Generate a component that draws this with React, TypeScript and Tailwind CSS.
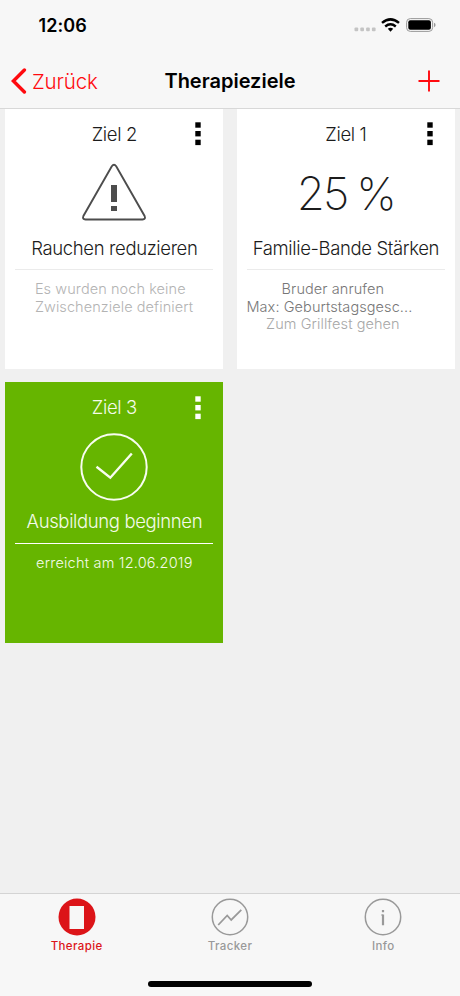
import type { ReactNode } from 'react'
import { clsx } from 'clsx'

interface GoalCardProps {
  title: string
  name: string
  reached?: boolean
  illustration: ReactNode
  children: ReactNode
}

function MenuDots() {
  return (
    <svg width="6" height="24" viewBox="0 0 6 24" fill="currentColor">
      <rect x="0.3" y="0.3" width="5.4" height="5.4" />
      <rect x="0.3" y="9" width="5.4" height="5.4" />
      <rect x="0.3" y="17.7" width="5.4" height="5.4" />
    </svg>
  )
}

function GoalCard({ title, name, reached = false, illustration, children }: GoalCardProps) {
  return (
    <section className={clsx('flex h-[261px] flex-col', reached ? 'bg-[#66b500] text-[#f4fbe9]' : 'bg-white text-[#1c1c1c]')}>
      <div className="grid h-[52px] shrink-0 grid-cols-[1fr_60px_1fr] items-center">
        <span />
        <h2 className="mt-px text-center text-[18.5px] font-light tracking-[-0.35px] whitespace-nowrap">{title}</h2>
        <button type="button" aria-label="Menü" className={clsx('mr-[22px] justify-self-end', reached ? 'text-white' : 'text-black')}>
          <MenuDots />
        </button>
      </div>
      <div className="flex h-[68px] shrink-0 items-center justify-center">{illustration}</div>
      <p className="flex h-[41px] shrink-0 items-center justify-center text-[18.5px] font-light tracking-[-0.37px] whitespace-nowrap">
        {name}
      </p>
      <div className={clsx('mx-[10px] h-px shrink-0', reached ? 'bg-white' : 'bg-[#ebebeb]')} />
      <div className="pt-[10px] text-[14.5px] leading-[17.5px] font-light tracking-[0.08px] whitespace-nowrap">{children}</div>
    </section>
  )
}

function WarningIcon() {
  return (
    <svg width="66" height="58" viewBox="0 0 66 58" fill="none" className="mb-[4px]">
      <path d="M30.8 3.2Q33 .2 35.2 3.2L63.6 53Q65 56.4 61.5 56.5H4.5Q1 56.4 2.4 53Z" stroke="#4d4d4d" strokeWidth="1.9" />
      <rect x="30" y="22" width="6" height="17" fill="#4d4d4d" />
      <rect x="30" y="43" width="6" height="5" fill="#4d4d4d" />
    </svg>
  )
}

function CheckIcon() {
  return (
    <svg width="68" height="68" viewBox="0 0 68 68" fill="none" stroke="#f8fdf0" strokeWidth="2" className="mb-[2px] shrink-0">
      <circle cx="34" cy="34" r="32.7" />
      <path d="M16.5 33.8L30.3 44.7L51.8 20.5" strokeWidth="2.4" />
    </svg>
  )
}

function StatusBar() {
  return (
    <div className="flex h-[50px] items-center justify-between pr-[24px] pl-[38.5px]">
      <span className="text-[18px] font-semibold tracking-[0.1px]">12:06</span>
      <div className="flex items-center">
        <svg width="22" height="14" viewBox="0 0 22 14" fill="#c4c4c4" className="mr-[5px]">
          <rect x="0.5" y="9.5" width="3.7" height="3.7" rx="1" />
          <rect x="6.3" y="9.5" width="3.7" height="3.7" rx="1" />
          <rect x="12.1" y="9.5" width="3.7" height="3.7" rx="1" />
          <rect x="17.9" y="9.5" width="3.7" height="3.7" rx="1" />
        </svg>
        <svg width="19" height="14" viewBox="0 0 19 14" className="mr-[6px]">
          <g fill="none" stroke="#000" strokeWidth="2.5">
            <path d="M1 4.9Q9.5 -2.1 18 4.9" />
            <path d="M4.2 8.4Q9.5 4.2 14.8 8.4" />
          </g>
          <path d="M6.8 10.8Q9.5 8.7 12.2 10.8L9.5 13.7Z" />
        </svg>
        <svg width="30" height="14" viewBox="0 0 30 14">
          <rect x="0.6" y="0.6" width="26" height="12.8" rx="3.7" fill="none" stroke="#999" strokeWidth="1" />
          <rect x="2.3" y="2.3" width="22.6" height="9.4" rx="2" />
          <path d="M28 4.8Q29.6 5.4 29.6 7T28 9.2Z" fill="#999" />
        </svg>
      </div>
    </div>
  )
}

interface TabProps {
  label: string
  active?: boolean
  children: ReactNode
}

function Tab({ label, active = false, children }: TabProps) {
  return (
    <button
      type="button"
      className={clsx('flex flex-col items-center pt-[4px] text-[11.5px] font-medium', active ? 'text-[#dc1418]' : 'text-[#999]')}
    >
      <svg width="38" height="38" viewBox="0 0 38 38" fill="none" stroke="currentColor" strokeWidth="1.5">
        {children}
      </svg>
      <span className="mt-[2px] leading-[16px] tracking-[0.4px]">{label}</span>
    </button>
  )
}

export default function App() {
  return (
    <div className="flex h-[996px] w-[460px] flex-col overflow-hidden bg-[#f0f0f0] font-['Inter',sans-serif] text-black">
      <header className="relative z-10 h-[109px] shrink-0 border-b border-[#d8d8d8] bg-[#f7f7f7]">
        <StatusBar />
        <div className="grid h-[62px] grid-cols-[1fr_auto_1fr] items-center">
          <button type="button" className="flex items-center pl-[11px] text-[#ff0a0f]">
            <svg width="16" height="26" viewBox="0 0 16 26" fill="none" stroke="currentColor" strokeWidth="3.4" strokeLinecap="round">
              <path d="M13.4 2L2.4 13L13.4 24" />
            </svg>
            <span className="mt-[2px] ml-[5px] text-[20.5px] font-light tracking-[-0.15px]">Zurück</span>
          </button>
          <h1 className="text-[20px] font-semibold">Therapieziele</h1>
          <button type="button" aria-label="Hinzufügen" className="mr-[20px] justify-self-end text-[#ff0a0f]">
            <svg width="22" height="22" viewBox="0 0 22 22" fill="none" stroke="currentColor" strokeWidth="1.9">
              <path d="M11 .5V21.5M.5 11H21.5" />
            </svg>
          </button>
        </div>
      </header>

      {/* The first row of goals is scrolled slightly under the header */}
      <main className="-mt-px grid flex-1 grid-cols-[218px_218px] content-start gap-x-[13.5px] gap-y-[12.5px] pl-[5.4px]">
        <GoalCard title="Ziel 2" name="Rauchen reduzieren" illustration={<WarningIcon />}>
          <p className="pl-[29.5px] text-[#b3b3b3]">
            Es wurden noch keine
            <br />
            Zwischenziele definiert
          </p>
        </GoalCard>
        <GoalCard
          title="Ziel 1"
          name="Familie-Bande Stärken"
          illustration={
            <span className="mt-px text-[45.5px] font-extralight tracking-[-1.9px] whitespace-nowrap [word-spacing:-2px]">25 %</span>
          }
        >
          <div className="flex w-[186px] flex-col items-center pl-[6px] text-[#777]">
            <p>Bruder anrufen</p>
            <p className="mr-[7px]">Max: Geburtstagsgesc...</p>
            <p className="text-[#a8a8a8]">Zum Grillfest gehen</p>
          </div>
        </GoalCard>
        <GoalCard title="Ziel 3" name="Ausbildung beginnen" reached illustration={<CheckIcon />}>
          <p className="text-center tracking-[0.2px]">erreicht am 12.06.2019</p>
        </GoalCard>
      </main>

      <footer className="h-[103px] shrink-0 border-t border-[#d4d4d4] bg-[#f7f7f7]">
        <nav className="grid h-[87px] grid-cols-3 items-start">
          <Tab label="Therapie" active>
            <circle cx="19" cy="19" r="18.5" fill="currentColor" stroke="none" />
            <rect x="11.5" y="8" width="14.5" height="23" fill="#f7f7f7" stroke="none" />
          </Tab>
          <Tab label="Tracker">
            <circle cx="19" cy="19" r="17.7" />
            <path d="M7.2 27L16.2 17.5L20.2 22L30.3 11.8" strokeWidth="1.8" />
          </Tab>
          <Tab label="Info">
            <circle cx="19" cy="19" r="17.7" />
            <path d="M19 16.5V27.2M19 12V14.3" strokeWidth="2.2" />
            <path d="M17.2 17H19" strokeWidth="1.2" />
          </Tab>
        </nav>
        <div className="mx-auto h-[6px] w-[164px] rounded-full bg-black" />
      </footer>
    </div>
  )
}
